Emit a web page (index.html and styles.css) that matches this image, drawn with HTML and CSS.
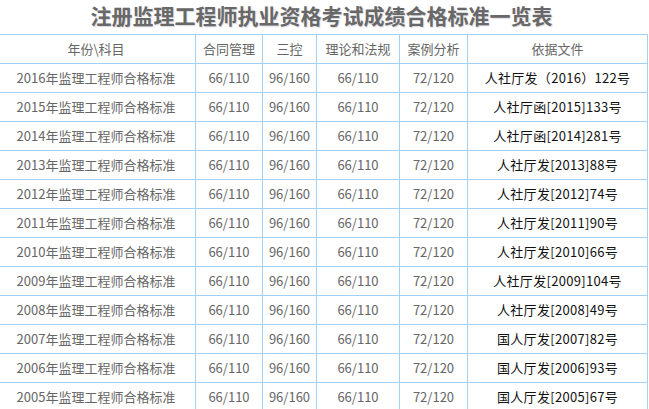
FILE: index.html
```html
<!DOCTYPE html>
<html lang="zh">
<head>
<meta charset="utf-8">
<link rel="stylesheet" href="styles.css">
</head>
<body>
<div class="wrap">
  <h1 class="title">注册监理工程师执业资格考试成绩合格标准一览表</h1>
  <table class="grid">
    <colgroup>
      <col class="c1"><col class="c2"><col class="c3"><col class="c4"><col class="c5"><col class="c6">
    </colgroup>
    <tr class="head"><td>年份\科目</td><td>合同管理</td><td>三控</td><td>理论和法规</td><td>案例分析</td><td>依据文件</td></tr>
    <tr><td>2016年监理工程师合格标准</td><td>66/110</td><td>96/160</td><td>66/110</td><td>72/120</td><td class="doc">人社厅发（2016）122号</td></tr>
    <tr><td>2015年监理工程师合格标准</td><td>66/110</td><td>96/160</td><td>66/110</td><td>72/120</td><td class="doc">人社厅函[2015]133号</td></tr>
    <tr><td>2014年监理工程师合格标准</td><td>66/110</td><td>96/160</td><td>66/110</td><td>72/120</td><td class="doc">人社厅函[2014]281号</td></tr>
    <tr><td>2013年监理工程师合格标准</td><td>66/110</td><td>96/160</td><td>66/110</td><td>72/120</td><td class="doc">人社厅发[2013]88号</td></tr>
    <tr><td>2012年监理工程师合格标准</td><td>66/110</td><td>96/160</td><td>66/110</td><td>72/120</td><td class="doc">人社厅发[2012]74号</td></tr>
    <tr><td>2011年监理工程师合格标准</td><td>66/110</td><td>96/160</td><td>66/110</td><td>72/120</td><td class="doc">人社厅发[2011]90号</td></tr>
    <tr><td>2010年监理工程师合格标准</td><td>66/110</td><td>96/160</td><td>66/110</td><td>72/120</td><td class="doc">人社厅发[2010]66号</td></tr>
    <tr><td>2009年监理工程师合格标准</td><td>66/110</td><td>96/160</td><td>66/110</td><td>72/120</td><td class="doc">人社厅发[2009]104号</td></tr>
    <tr><td>2008年监理工程师合格标准</td><td>66/110</td><td>96/160</td><td>66/110</td><td>72/120</td><td class="doc">人社厅发[2008]49号</td></tr>
    <tr><td>2007年监理工程师合格标准</td><td>66/110</td><td>96/160</td><td>66/110</td><td>72/120</td><td class="doc">国人厅发[2007]82号</td></tr>
    <tr><td>2006年监理工程师合格标准</td><td>66/110</td><td>96/160</td><td>66/110</td><td>72/120</td><td class="doc">国人厅发[2006]93号</td></tr>
    <tr><td>2005年监理工程师合格标准</td><td>66/110</td><td>96/160</td><td>66/110</td><td>72/120</td><td class="doc">国人厅发[2005]67号</td></tr>
  </table>
</div>
</body>
</html>
```
FILE: styles.css
```css
html, body {
  margin: 0;
  padding: 0;
  background: #ffffff;
  overflow: hidden;
}
.wrap {
  margin-left: -4px;
  width: 651px;
  font-family: "Noto Sans CJK SC", "Noto Sans", sans-serif;
}
.title {
  margin: 0;
  height: 34px;
  line-height: 30px;
  text-align: center;
  font-size: 21px;
  font-weight: bold;
  color: #686868;
  text-shadow: 1px 1px 1px rgba(150, 150, 170, 0.35);
}
.grid {
  border-collapse: collapse;
  table-layout: fixed;
  width: 651px;
  font-size: 13px;
  color: #666666;
}
.c1 { width: 199px; }
.c2 { width: 67px; }
.c3 { width: 54px; }
.c4 { width: 83px; }
.c5 { width: 68px; }
.c6 { width: 180px; }
.grid td {
  border: 1px solid #a3d1f5;
  height: 28px;
  padding: 0;
  text-align: center;
  vertical-align: middle;
  white-space: nowrap;
  line-height: 16px;
}
.grid td.doc {
  color: #111111;
  letter-spacing: 0.3px;
}
```
